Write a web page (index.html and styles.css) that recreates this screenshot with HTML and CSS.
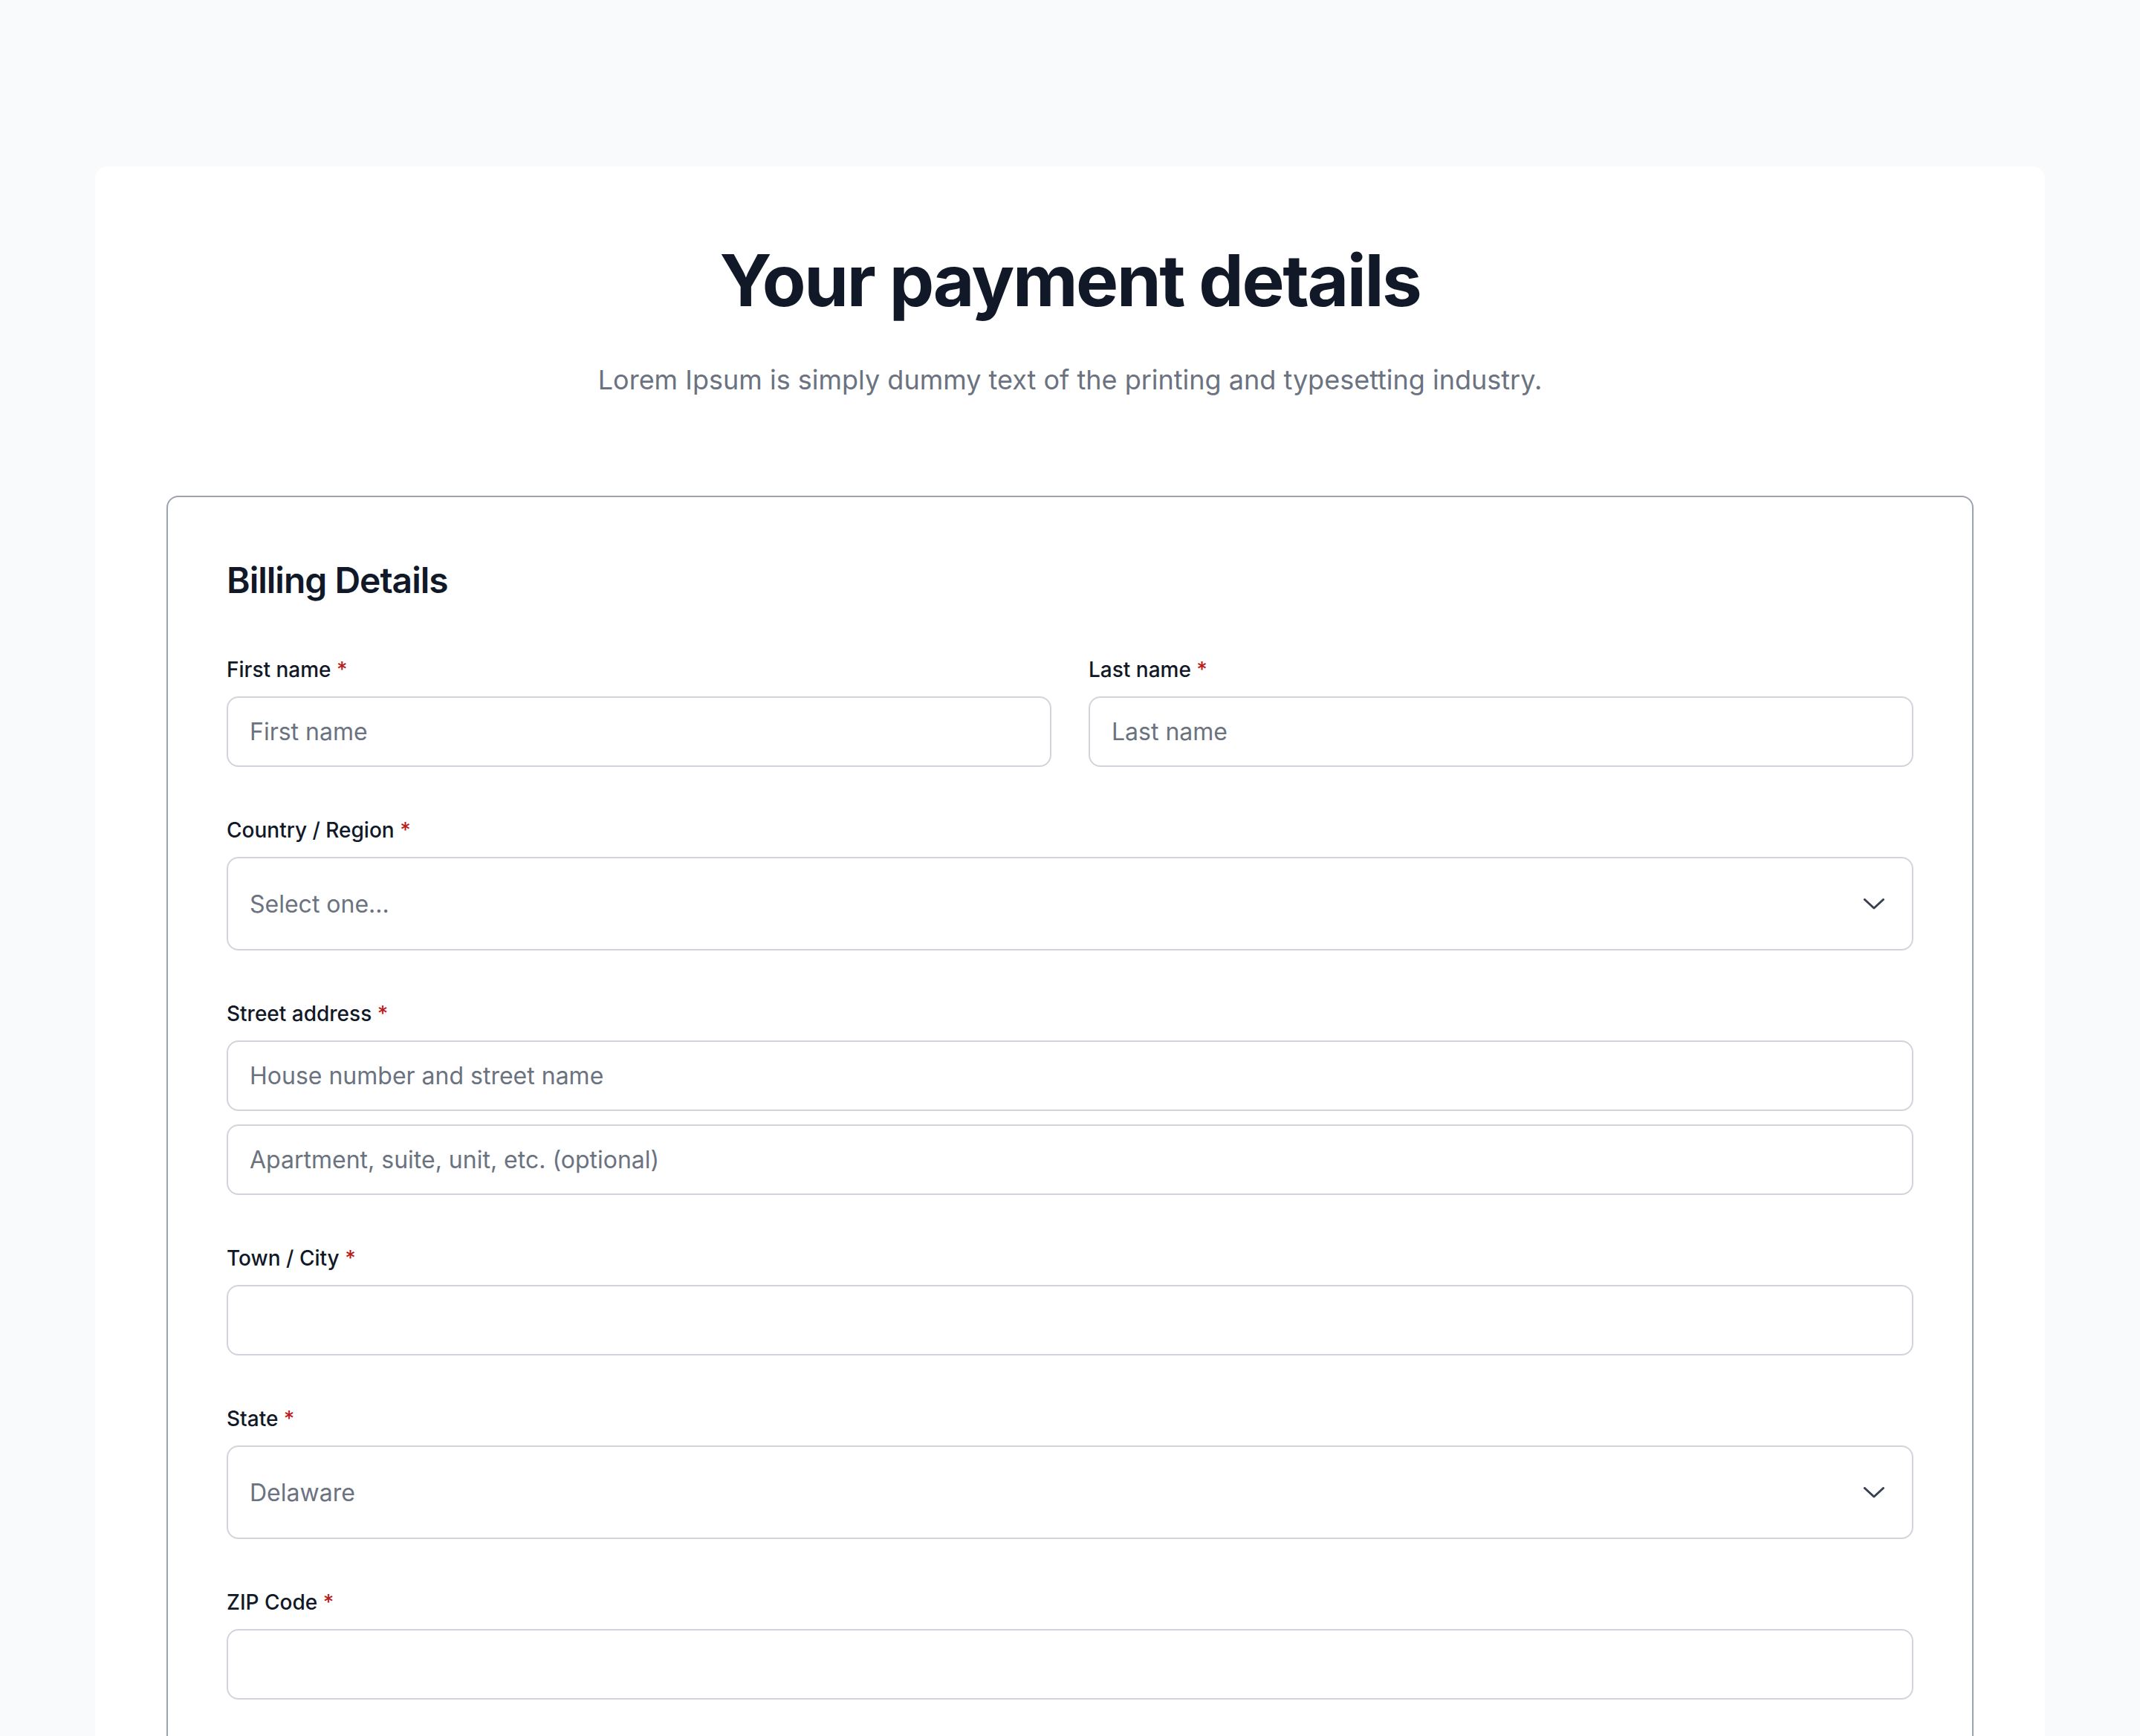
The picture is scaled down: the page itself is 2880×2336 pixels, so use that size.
FILE: index.html
```html
<!DOCTYPE html>
<html lang="en">
<head>
  <meta charset="UTF-8" />
  <title>Your payment details</title>
  <link rel="stylesheet" href="styles.css">
</head>
<body>
  <main class="card">
    <h1 class="title">Your payment details</h1>
    <p class="subtitle">Lorem Ipsum is simply dummy text of the printing and typesetting industry.</p>

    <form class="billing">
      <h2 class="billing-title">Billing Details</h2>

      <div class="row">
        <div class="field">
          <label for="first">First name <span class="req">*</span></label>
          <input type="text" id="first" placeholder="First name" />
        </div>
        <div class="field">
          <label for="last">Last name <span class="req">*</span></label>
          <input type="text" id="last" placeholder="Last name" />
        </div>
      </div>

      <div class="field">
        <label for="country">Country / Region <span class="req">*</span></label>
        <div class="select-wrap">
          <select id="country">
            <option>Select one...</option>
            <option>United States</option>
            <option>Canada</option>
          </select>
          <svg class="chevron" viewBox="0 0 28 15" width="28" height="15">
            <polyline points="1.5,1.5 14,13 26.5,1.5" fill="none" stroke="#374151" stroke-width="3" stroke-linecap="round" stroke-linejoin="round"/>
          </svg>
        </div>
      </div>

      <div class="field">
        <label for="street">Street address <span class="req">*</span></label>
        <input type="text" id="street" placeholder="House number and street name" />
        <input type="text" id="street2" class="stacked" placeholder="Apartment, suite, unit, etc. (optional)" />
      </div>

      <div class="field">
        <label for="city">Town / City <span class="req">*</span></label>
        <input type="text" id="city" />
      </div>

      <div class="field">
        <label for="state">State <span class="req">*</span></label>
        <div class="select-wrap">
          <select id="state">
            <option>Delaware</option>
            <option>Maryland</option>
            <option>New Jersey</option>
          </select>
          <svg class="chevron" viewBox="0 0 28 15" width="28" height="15">
            <polyline points="1.5,1.5 14,13 26.5,1.5" fill="none" stroke="#374151" stroke-width="3" stroke-linecap="round" stroke-linejoin="round"/>
          </svg>
        </div>
      </div>

      <div class="field">
        <label for="zip">ZIP Code <span class="req">*</span></label>
        <input type="text" id="zip" />
      </div>
    </form>
  </main>
</body>
</html>
```

FILE: styles.css
```css
* {
  box-sizing: border-box;
}
body {
  margin: 0;
  padding: 224px 128px 0;
  background-color: #f9fafb;
  font-family: "Inter", "Noto Sans", sans-serif;
  color: #111827;
}
.card {
  background-color: #fff;
  border-radius: 16px;
  padding: 96px 96px 96px;
}
.title {
  margin: 0;
  font-size: 96px;
  line-height: 1.2;
  font-weight: 700;
  letter-spacing: -2.4px;
  text-align: center;
  color: #111827;
}
.subtitle {
  margin: 48px 0 0;
  font-size: 36px;
  line-height: 56px;
  text-align: center;
  color: #6b7280;
}
.billing {
  margin-top: 128px;
  border: 2px solid #9ca3af;
  border-radius: 16px;
  padding: 80px 79px 78px;
  display: flex;
  flex-direction: column;
  gap: 65px;
}
.billing-title {
  margin: 0 0 3px;
  font-size: 48px;
  line-height: 64px;
  font-weight: 600;
  letter-spacing: -1px;
}
.row {
  display: grid;
  grid-template-columns: 1fr 1fr;
  column-gap: 50px;
}
.field {
  display: flex;
  flex-direction: column;
}
label {
  font-size: 28px;
  line-height: 40px;
  font-weight: 500;
  margin-bottom: 16px;
}
.req {
  color: #b91c1c;
}
input, select {
  width: 100%;
  font-family: inherit;
  font-size: 32px;
  color: #6b7280;
  background-color: #fff;
  border: 2px solid #d1d5db;
  border-radius: 16px;
  padding: 0 29px;
  outline: none;
}
input {
  height: 95px;
}
input::placeholder {
  color: #6b7280;
}
input.stacked {
  margin-top: 18px;
}
.select-wrap {
  position: relative;
}
select {
  height: 126px;
  appearance: none;
  -webkit-appearance: none;
}
.chevron {
  position: absolute;
  right: 39px;
  top: 50%;
  margin-top: -7px;
  pointer-events: none;
}
```
